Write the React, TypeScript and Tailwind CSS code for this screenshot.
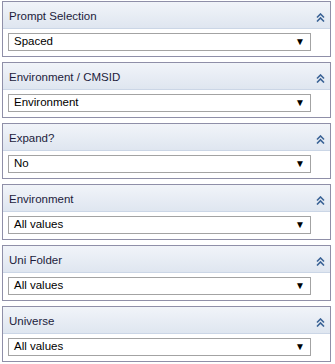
import React from "react";

const panels = [
  { title: "Prompt Selection", value: "Spaced" },
  { title: "Environment / CMSID", value: "Environment" },
  { title: "Expand?", value: "No" },
  { title: "Environment", value: "All values" },
  { title: "Uni Folder", value: "All values" },
  { title: "Universe", value: "All values" },
];

function CollapseIcon() {
  return (
    <svg width="9" height="9" viewBox="0 0 9 9" className="block">
      <path d="M1 4.5 L4.5 1 L8 4.5" fill="none" stroke="#3b6396" strokeWidth="1.6" />
      <path d="M1 8.5 L4.5 5 L8 8.5" fill="none" stroke="#3b6396" strokeWidth="1.6" />
    </svg>
  );
}

function PromptPanel({ title, value }: { title: string; value: string }) {
  return (
    <div className="h-[56px] border border-[#8f8fa8] bg-white">
      {/* Header */}
      <div className="flex h-[27px] items-center justify-between border-b border-[#cbd6e6] bg-gradient-to-b from-[#f1f4f9] to-[#dfe6f0] pl-[6px] pr-[5px] pt-[4px]">
        <span className="text-[11.5px] leading-none text-[#1c1c3c]">{title}</span>
        <CollapseIcon />
      </div>
      {/* Dropdown */}
      <div className="pl-[5px] pr-[19px] pt-[4px]">
        <div className="flex h-[18px] items-center justify-between border border-[#a3a3a3] bg-white pl-[5px] pr-[5px]">
          <span className="text-[11.5px] leading-none text-black">{value}</span>
          <span className="text-[10px] leading-none text-black">▼</span>
        </div>
      </div>
    </div>
  );
}

export default function App() {
  return (
    <div className="flex h-[364px] w-[335px] flex-col gap-[5px] bg-white pl-[2px] pr-[4px] pt-[1px] font-['Liberation_Sans',Arial,sans-serif]">
      {panels.map((p) => (
        <PromptPanel key={p.title + p.value} title={p.title} value={p.value} />
      ))}
    </div>
  );
}
